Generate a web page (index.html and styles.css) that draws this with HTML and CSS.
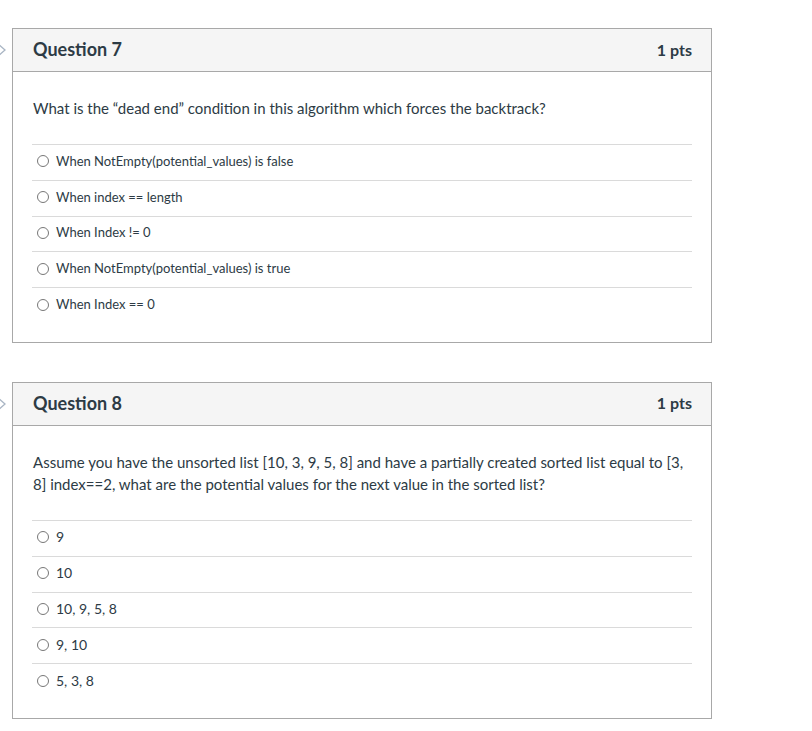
FILE: index.html
```html
<!DOCTYPE html>
<html lang="en">
<head>
<meta charset="utf-8">
<link rel="stylesheet" href="styles.css">
</head>
<body>
<div class="page">
  <div class="question-wrap">
    <svg class="flag" width="8" height="16" viewBox="0 0 8 16"><path d="M-2 2 L5 8 L-2 14" fill="none" stroke="#a9b5c4" stroke-width="1.3"/></svg>
    <div class="card">
      <div class="card-header">
        <span class="q-title">Question 7</span>
        <span class="q-pts">1 pts</span>
      </div>
      <div class="card-body">
        <p class="q-text">What is the “dead end” condition in this algorithm which forces the backtrack?</p>
        <ul class="answers small">
          <li><span class="radio"></span>When NotEmpty(potential_values) is false</li>
          <li><span class="radio"></span>When index == length</li>
          <li><span class="radio"></span>When Index != 0</li>
          <li><span class="radio"></span>When NotEmpty(potential_values) is true</li>
          <li><span class="radio"></span>When Index == 0</li>
        </ul>
      </div>
    </div>
  </div>
  <div class="question-wrap">
    <svg class="flag" width="8" height="16" viewBox="0 0 8 16"><path d="M-2 2 L5 8 L-2 14" fill="none" stroke="#a9b5c4" stroke-width="1.3"/></svg>
    <div class="card">
      <div class="card-header">
        <span class="q-title">Question 8</span>
        <span class="q-pts">1 pts</span>
      </div>
      <div class="card-body">
        <p class="q-text">Assume you have the unsorted list [10, 3, 9, 5, 8] and have a partially created sorted list equal to [3, 8] index==2, what are the potential values for the next value in the sorted list?</p>
        <ul class="answers">
          <li><span class="radio"></span>9</li>
          <li><span class="radio"></span>10</li>
          <li><span class="radio"></span>10, 9, 5, 8</li>
          <li><span class="radio"></span>9, 10</li>
          <li><span class="radio"></span>5, 3, 8</li>
        </ul>
      </div>
    </div>
  </div>
</div>
</body>
</html>
```
FILE: styles.css
```css
html, body {
  margin: 0;
  padding: 0;
  background: #fff;
}
body {
  font-family: Lato, "Open Sans", sans-serif;
  color: #2d3b45;
}
.page {
  padding: 28px 0 0 12px;
  display: flex;
  flex-direction: column;
  gap: 39px;
}
.question-wrap {
  position: relative;
}
.flag {
  position: absolute;
  left: -12px;
  top: 14px;
}
.card {
  width: 698px;
  border: 1px solid #a8a8a8;
  background: #fff;
}
.card-header {
  box-sizing: border-box;
  height: 43px;
  background: #f5f5f5;
  border-bottom: 1px solid #a8a8a8;
  display: flex;
  align-items: center;
  justify-content: space-between;
  padding: 0 19px 2px 20px;
}
.q-title {
  font-weight: 700;
  font-size: 18px;
}
.q-pts {
  font-weight: 700;
  font-size: 16px;
  color: #2d3b45;
}
.card-body {
  padding: 25px 19px 19px 19px;
}
.q-text {
  margin: 0 0 25px 1px;
  font-size: 15px;
  line-height: 22px;
}
.answers {
  list-style: none;
  margin: 0;
  padding: 0;
}
.answers li {
  box-sizing: border-box;
  border-top: 1px solid #dadada;
  height: 35.8px;
  padding-bottom: 3px;
  display: flex;
  align-items: center;
  font-size: 14px;
}
.answers.small li {
  font-size: 13px;
}
.radio {
  width: 10px;
  height: 10px;
  border: 1px solid #777;
  border-radius: 50%;
  margin: 1px 7px 0 5px;
  flex: none;
}
```
